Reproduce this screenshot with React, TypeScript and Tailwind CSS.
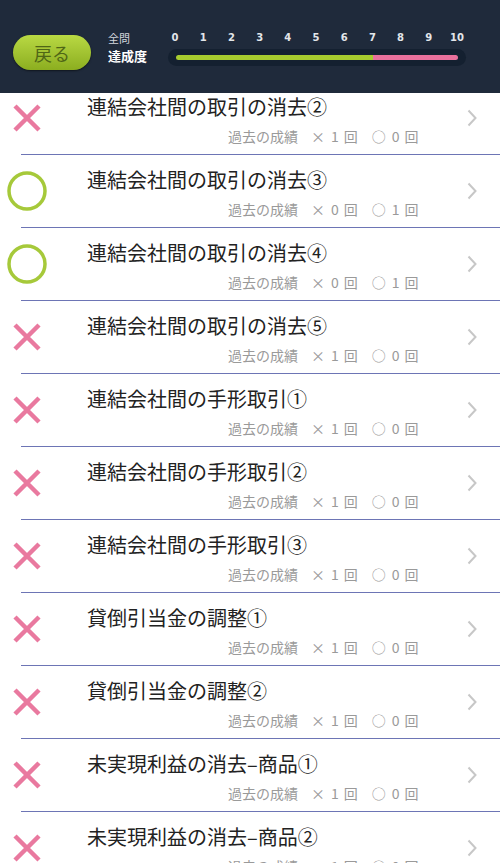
import { Fragment } from "react"

type Result = "ok" | "ng"

type Lesson = {
  title: string
  result: Result
  wrong: number
  right: number
}

const lessons: Lesson[] = [
  { title: "連結会社間の取引の消去②", result: "ng", wrong: 1, right: 0 },
  { title: "連結会社間の取引の消去③", result: "ok", wrong: 0, right: 1 },
  { title: "連結会社間の取引の消去④", result: "ok", wrong: 0, right: 1 },
  { title: "連結会社間の取引の消去⑤", result: "ng", wrong: 1, right: 0 },
  { title: "連結会社間の手形取引①", result: "ng", wrong: 1, right: 0 },
  { title: "連結会社間の手形取引②", result: "ng", wrong: 1, right: 0 },
  { title: "連結会社間の手形取引③", result: "ng", wrong: 1, right: 0 },
  { title: "貸倒引当金の調整①", result: "ng", wrong: 1, right: 0 },
  { title: "貸倒引当金の調整②", result: "ng", wrong: 1, right: 0 },
  { title: "未実現利益の消去–商品①", result: "ng", wrong: 1, right: 0 },
  { title: "未実現利益の消去–商品②", result: "ng", wrong: 1, right: 0 },
]

const ticks = [0, 1, 2, 3, 4, 5, 6, 7, 8, 9, 10]

const ResultMark = ({ result }: { result: Result }) => {
  if (result === "ok") {
    return (
      <svg width="42" height="42" viewBox="0 0 42 42">
        <circle cx="21" cy="21" r="18" fill="none" stroke="#a6c93a" strokeWidth="3.5" />
      </svg>
    )
  }
  return (
    <svg width="30" height="30" viewBox="0 0 30 30">
      <path d="M3 3 L27 27 M27 3 L3 27" stroke="#e9799f" strokeWidth="4.5" strokeLinecap="butt" />
    </svg>
  )
}

const Chevron = () => (
  <svg width="12" height="20" viewBox="0 0 12 20">
    <path d="M2.5 2.5 L9.5 10 L2.5 17.5" fill="none" stroke="#c7c7c7" strokeWidth="2" />
  </svg>
)

const Header = () => (
  <div className="h-[93px] bg-[#1f2a3b] flex items-center shrink-0">
    <button className="ml-[13px] mt-[12px] w-[78px] h-[35px] rounded-full bg-gradient-to-b from-[#b9d943] to-[#8cae1f] text-[#4f6616] text-[18px] leading-none shadow-[0_1px_2px_rgba(0,0,0,0.5)]">
      戻る
    </button>
    <div className="ml-[17px] w-[53px] mt-[2px] flex flex-col">
      <span className="text-[11px] leading-[14px] text-[#d4d8de]">全問</span>
      <span className="text-[13px] leading-[18px] font-bold text-white mt-[2px]">達成度</span>
    </div>
    <div className="flex flex-col mt-[4px]">
      <div className="grid grid-cols-11 w-[310px]">
        {ticks.map((t) => (
          <span key={t} className="text-center text-[10px] leading-[12px] font-bold text-[#e3e6ea] font-['DejaVu_Sans',sans-serif]">
            {t}
          </span>
        ))}
      </div>
      <div className="ml-[7px] mt-[5px] w-[298px] h-[17px] rounded-full bg-[#142030] flex items-center px-[8px]">
        <div className="flex w-full h-[5px] rounded-full overflow-hidden">
          <div className="w-[70%] bg-[#a6cb2f]" />
          <div className="flex-1 bg-[#e8709c]" />
        </div>
      </div>
    </div>
  </div>
)

const LessonRow = ({ lesson }: { lesson: Lesson }) => (
  <div className="h-[72px] flex">
    <div className="w-[54px] flex items-center justify-center">
      <ResultMark result={lesson.result} />
    </div>
    <div className="ml-[33px] flex-1 flex flex-col pt-[11px]">
      <div className="text-[20px] leading-[28px] text-[#222222]">{lesson.title}</div>
      <div className="ml-[141px] mt-[5px] flex items-center text-[14px] leading-[20px] text-[#9a9a9a]">
        <span>過去の成績</span>
        <span className="ml-[13px]">×</span>
        <span className="ml-[6px]">{lesson.wrong}</span>
        <span className="ml-[5px]">回</span>
        <span className="ml-[14px]">○</span>
        <span className="ml-[6px]">{lesson.right}</span>
        <span className="ml-[5px]">回</span>
      </div>
    </div>
    <div className="w-[44px] flex items-center justify-start pl-[10px]">
      <Chevron />
    </div>
  </div>
)

export default function App() {
  return (
    <div className="w-[500px] h-[863px] overflow-hidden flex flex-col bg-white font-['Noto_Sans_CJK_JP','Noto_Sans',sans-serif]">
      <Header />
      <div className="flex-1 overflow-hidden">
        <div className="-mt-[11px]">
          {lessons.map((lesson) => (
            <Fragment key={lesson.title}>
              <LessonRow lesson={lesson} />
              <div className="ml-[21px] h-px bg-[#6d75b5]" />
            </Fragment>
          ))}
        </div>
      </div>
    </div>
  )
}
